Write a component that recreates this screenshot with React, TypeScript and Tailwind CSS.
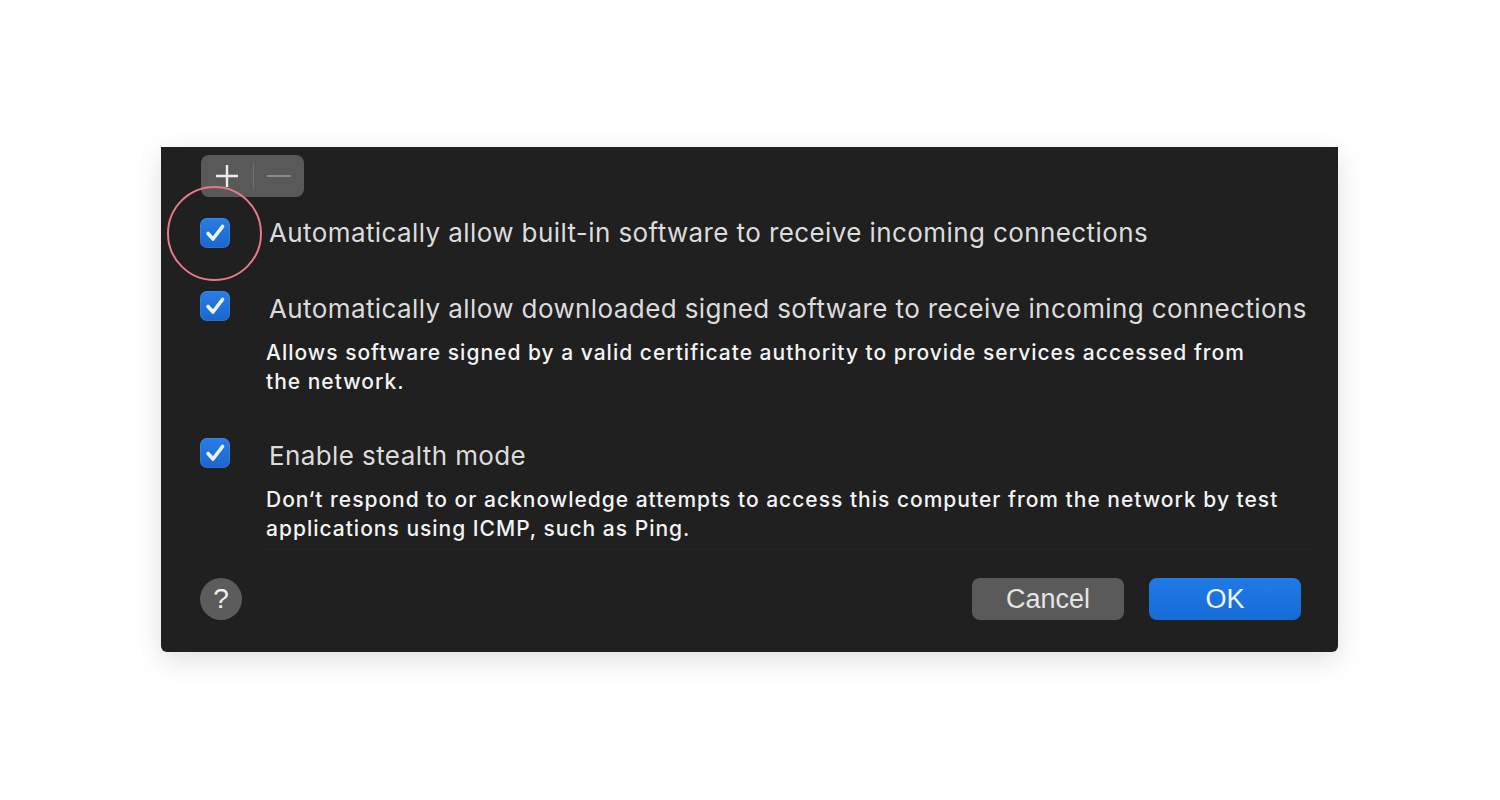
import { useState } from "react";

const TITLE_FONT = { fontFamily: 'Inter, "Noto Sans", sans-serif', letterSpacing: "0.4px" };
const DESC_FONT = { fontFamily: 'Inter, "Noto Sans", sans-serif', letterSpacing: "1px" };
const BTN_FONT = { fontFamily: '"Liberation Sans", Arial, sans-serif' };

function Checkbox({ checked, onChange }: { checked: boolean; onChange: () => void }) {
  return (
    <button
      onClick={onChange}
      className="flex h-[30px] w-[30px] shrink-0 items-center justify-center rounded-[7px] bg-gradient-to-b from-[#2a7de6] to-[#1a66cf] shadow-[inset_0_0_0_1px_rgba(255,255,255,0.08)]"
    >
      {checked && (
        <svg width="24" height="24" viewBox="0 0 24 24" fill="none">
          <path d="M5 12.5 L10 18 L19.5 5.5" stroke="#eef4ff" strokeWidth="3.6" strokeLinecap="round" strokeLinejoin="round" />
        </svg>
      )}
    </button>
  );
}

function Option({
  label,
  desc,
  checked,
  onChange,
}: {
  label: string;
  desc?: string[];
  checked: boolean;
  onChange: () => void;
}) {
  return (
    <div className="flex items-start gap-[39px]">
      <Checkbox checked={checked} onChange={onChange} />
      <div className="pt-[3px]">
        <div className="text-[26px] leading-[30px] text-[#dcdcdc]" style={TITLE_FONT}>
          {label}
        </div>
        {desc && (
          <div className="-ml-[3px] mt-[14px] text-[21px] font-medium leading-[29px] text-[#f4f4f4]" style={DESC_FONT}>
            {desc.map((l) => (
              <div key={l}>{l}</div>
            ))}
          </div>
        )}
      </div>
    </div>
  );
}

export default function App() {
  const [opts, setOpts] = useState([true, true, true]);
  const toggle = (i: number) => setOpts(opts.map((v, j) => (j === i ? !v : v)));

  return (
    <div className="h-[800px] w-[1500px] bg-white pl-[161px] pt-[147px]">
      <div className="relative h-[505px] w-[1177px] rounded-b-[6px] bg-[#202020] shadow-[0_8px_28px_rgba(0,0,0,0.13)]">
        {/* +/- buttons */}
        <div className="relative top-[8px] ml-[40px] flex h-[42px] w-[103px] items-center rounded-[8px] bg-[#595959]">
          <div className="flex w-[52px] items-center justify-center">
            <svg width="24" height="24" viewBox="0 0 24 24">
              <path d="M12 1 V23 M1 12 H23" stroke="#ececec" strokeWidth="2.4" />
            </svg>
          </div>
          <div className="h-[26px] w-[1px] bg-[#6e6e6e]" />
          <div className="flex flex-1 items-center justify-center">
            <svg width="24" height="4" viewBox="0 0 24 4">
              <path d="M0 2 H24" stroke="#8a8a8a" strokeWidth="2" />
            </svg>
          </div>
        </div>

        {/* highlight ring */}
        <div className="absolute left-[6px] top-[39px] h-[95px] w-[95px] rounded-full border-2 border-[#e87a88]" />

        <div className="ml-[39px] mr-[25px] mt-[29px]">
          <div className="flex items-center gap-[39px]">
            <Checkbox checked={opts[0]} onChange={() => toggle(0)} />
            <div className="text-[26px] leading-[30px] text-[#dcdcdc]" style={TITLE_FONT}>
              Automatically allow built-in software to receive incoming connections
            </div>
          </div>
          <div className="mt-[43px]">
            <Option
              checked={opts[1]}
              onChange={() => toggle(1)}
              label="Automatically allow downloaded signed software to receive incoming connections"
              desc={[
                "Allows software signed by a valid certificate authority to provide services accessed from",
                "the network.",
              ]}
            />
          </div>
          <div className="mt-[42px]">
            <Option
              checked={opts[2]}
              onChange={() => toggle(2)}
              label="Enable stealth mode"
              desc={[
                "Don\u2018t respond to or acknowledge attempts to access this computer from the network by test",
                "applications using ICMP, such as Ping.",
              ]}
            />
          </div>
          <div className="ml-[65px] mt-[6px] h-[1px] bg-[#252525]" />
        </div>

        {/* footer */}
        <div className="mt-[28px] flex items-center pl-[39px] pr-[37px]">
          <button className="flex h-[42px] w-[42px] items-center justify-center rounded-full bg-[#5c5c5c] text-[28px] text-[#f0f0f0]" style={BTN_FONT}>
            ?
          </button>
          <div className="ml-auto flex gap-[25px]">
            <button className="h-[42px] w-[152px] rounded-[8px] bg-[#5a5a5a] text-[27px] text-[#e4e4e4]" style={BTN_FONT}>
              Cancel
            </button>
            <button className="h-[42px] w-[152px] rounded-[8px] bg-gradient-to-b from-[#1f7ae6] to-[#176bd6] text-[27px] text-[#f2f6ff]" style={BTN_FONT}>
              OK
            </button>
          </div>
        </div>
      </div>
    </div>
  );
}
